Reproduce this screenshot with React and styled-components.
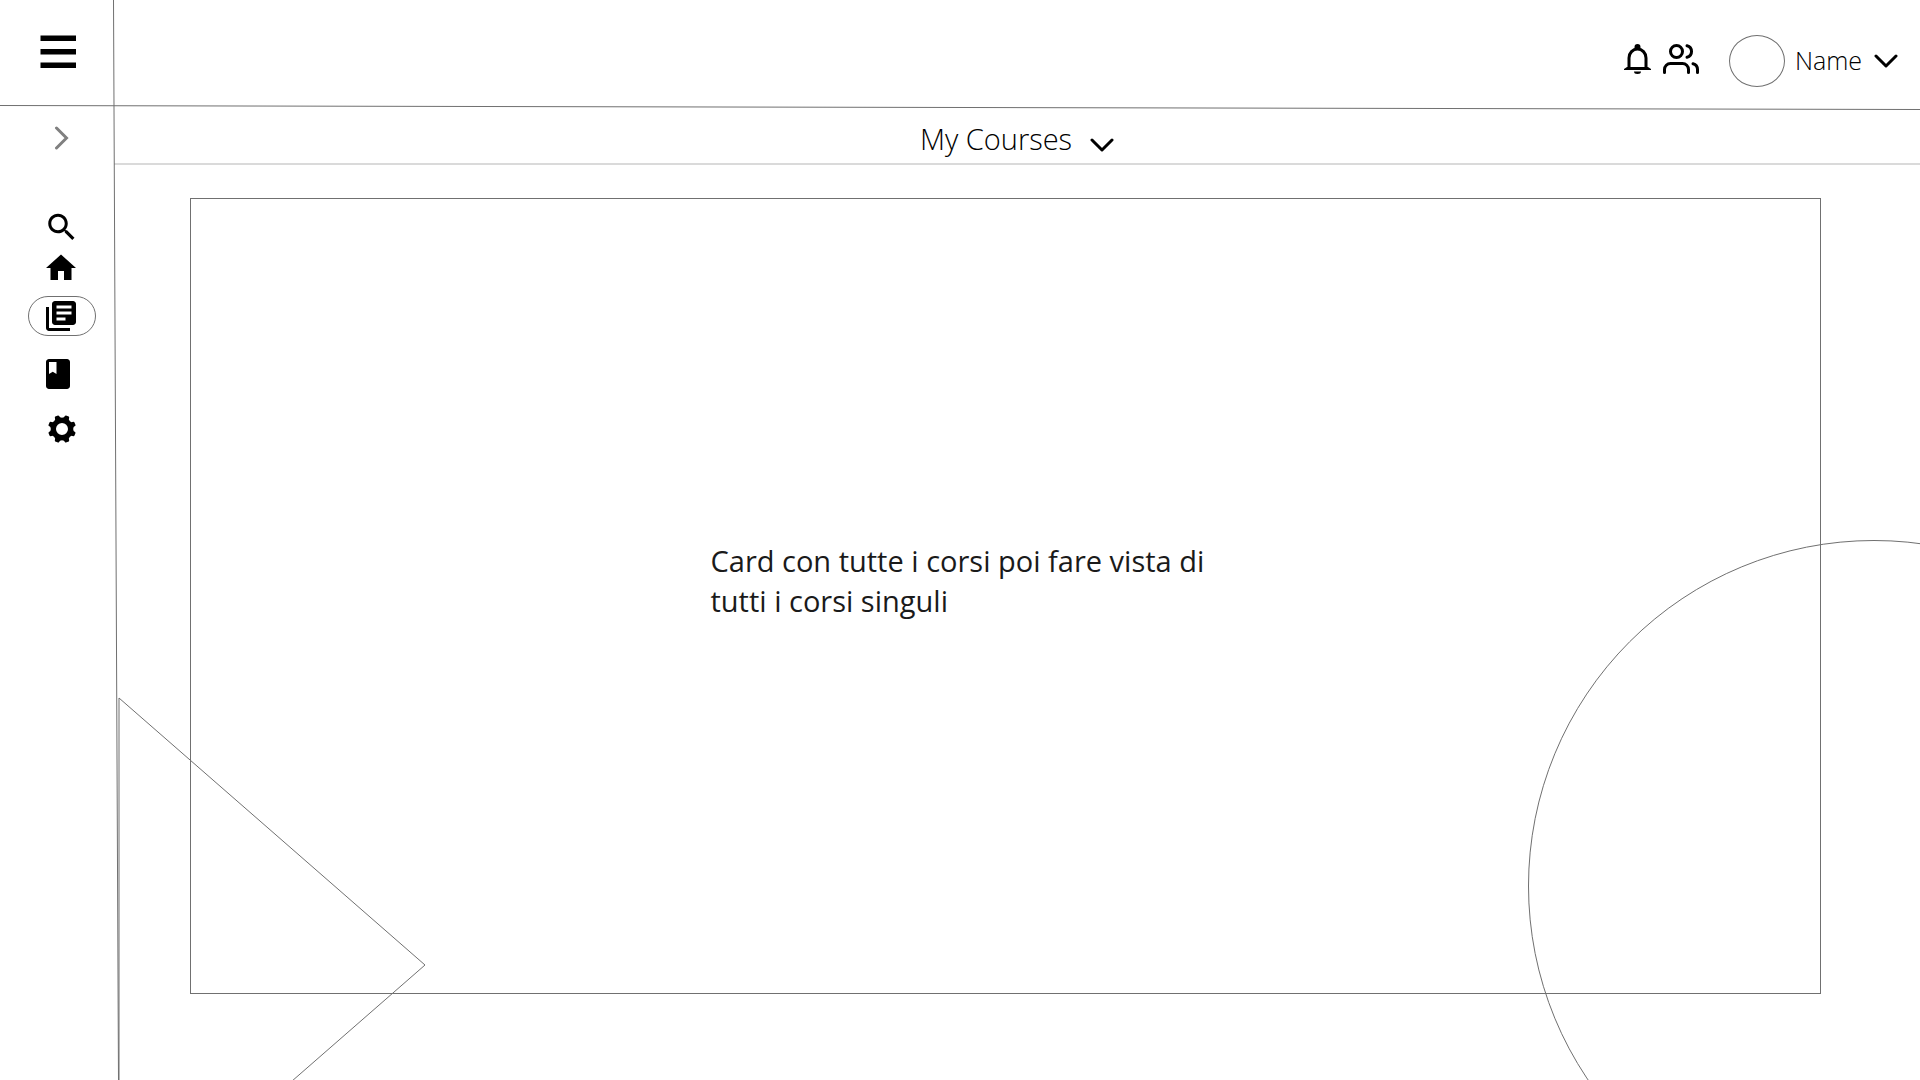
import React from "react";
import styled, { createGlobalStyle } from "styled-components";

const LINE = "#707070";

const GlobalStyle = createGlobalStyle`
  *, *::before, *::after { box-sizing: border-box; }
  body {
    margin: 0;
    background: #fff;
    color: #000;
    font-family: "Open Sans", "Noto Sans", sans-serif;
  }
  button { font: inherit; color: inherit; }
`;

const Page = styled.div`
  position: relative;
  display: grid;
  grid-template-columns: 114px minmax(0, 1fr);
  min-height: 100vh;
  overflow: hidden;
`;

const Rules = styled.svg`
  position: absolute;
  inset: 0;
  width: 100%;
  height: 100%;
  pointer-events: none;
  fill: none;
  stroke: ${LINE};
`;

const Triangle = styled.svg`
  position: absolute;
  left: 118px;
  bottom: -154px;
  width: 310px;
  height: 540px;
  pointer-events: none;
  fill: none;
  stroke: ${LINE};
`;

const Circle = styled.div`
  position: absolute;
  right: -300px;
  bottom: -152px;
  width: 692px;
  height: 692px;
  border: 1px solid ${LINE};
  border-radius: 50%;
  pointer-events: none;
`;

const IconButton = styled.button`
  display: flex;
  align-items: center;
  padding: 0;
  border: 0;
  background: none;
  cursor: pointer;
`;

const Sidebar = styled.aside`
  display: flex;
  flex-direction: column;
  align-items: flex-start;
`;

const MenuArea = styled.div`
  display: flex;
  align-items: center;
  height: 103px;
  padding-left: 40px;
`;

const ExpandArea = styled.div`
  display: flex;
  align-items: center;
  height: 69px;
  padding-left: 54px;
`;

const Nav = styled.nav`
  display: flex;
  flex-direction: column;
  padding: 36px 0 0 28px;
`;

const NavItem = styled(IconButton)`
  width: 68px;
  height: 40px;
  margin-top: ${(p) => p.$gap || 0}px;
  padding-left: 17px;
  border: 1px solid ${(p) => (p.$active ? LINE : "transparent")};
  border-radius: 20px;
`;

const Content = styled.div`
  display: flex;
  flex-direction: column;
`;

const Header = styled.header`
  display: flex;
  align-items: center;
  justify-content: flex-end;
  height: 108px;
  padding: 14px 22px 0 0;
`;

const HeaderIcons = styled.div`
  display: flex;
  align-items: center;
  gap: 12px;
  margin-right: 30px;
  padding-bottom: 4px;
`;

const Account = styled(IconButton)`
  gap: 10px;
  font-size: 25px;
  font-weight: 350;
  line-height: 32px;
`;

const AccountName = styled.span`
  padding: 0 2px 2px 0;
`;

const Avatar = styled.span`
  width: 56px;
  height: 52px;
  border: 1px solid ${LINE};
  border-radius: 50%;
`;

const TitleBar = styled.div`
  display: flex;
  align-items: center;
  justify-content: center;
  height: 57px;
  padding-top: 6px;
  border-bottom: 2px solid #dadada;
`;

const CourseMenu = styled(IconButton)`
  align-items: flex-end;
  gap: 18px;
  font-size: 29px;
  font-weight: 350;
  line-height: 28px;
`;

const Main = styled.main`
  display: flex;
  flex: 1;
  padding: 33px 99px 86px 76px;
`;

const Card = styled.section`
  display: flex;
  flex: 1;
  align-items: center;
  justify-content: center;
  border: 1px solid ${LINE};
  padding: 0 90px 30px 0;
`;

const Note = styled.p`
  width: 500px;
  margin: 0;
  font-size: 29px;
  line-height: 40px;
  color: #1a1a1a;
`;

function ChevronDown() {
  return (
    <svg width="24" height="16" viewBox="0 0 24 16" fill="none" stroke="#000" strokeWidth="3" strokeLinecap="round" strokeLinejoin="round" aria-hidden="true">
      <path d="M2 3 L12 13 L22 3" />
    </svg>
  );
}

// Eight-toothed cog centred on the origin, with a round hole.
function cogPath() {
  const at = (radius, degrees) => {
    const a = (degrees * Math.PI) / 180;
    return `${(radius * Math.cos(a)).toFixed(2)} ${(radius * Math.sin(a)).toFixed(2)}`;
  };
  let d = "";
  for (let i = 0; i < 8; i += 1) {
    const mid = 22.5 + i * 45;
    d += `${i ? "L" : "M"}${at(11.8, mid - 13)} L${at(13.3, mid - 10)} Q${at(14, mid - 9)} ${at(14.1, mid - 6)} L${at(14.1, mid + 6)} Q${at(14, mid + 9)} ${at(13.3, mid + 10)} L${at(11.8, mid + 13)} Q${at(10.7, mid + 22.5)} ${at(11.8, mid + 32)} `;
  }
  return `${d}Z M0 -6 A6 6 0 1 0 0 6 A6 6 0 1 0 0 -6 Z`;
}

const navItems = [
  {
    label: "Search", viewBox: "1.5 2.5 20 20",
    d: "M15.5 14h-.79l-.28-.27C15.41 12.59 16 11.11 16 9.5 16 5.91 13.09 3 9.5 3S3 5.91 3 9.5 5.91 16 9.5 16c1.61 0 3.09-.59 4.23-1.57l.27.28v.79l5 4.99L20.49 19l-4.99-5zm-6 0C7.01 14 5 11.99 5 9.5S7.01 5 9.5 5 14 7.01 14 9.5 11.99 14 9.5 14z",
  },
  { label: "Home", viewBox: "2 2 20 20", d: "M10 20v-6h4v6h5v-8h3L12 3 2 12h3v8z" },
  {
    label: "My Courses", viewBox: "2 2 20 20", active: true, gap: 8,
    d: "M4 6H2v14c0 1.1.9 2 2 2h14v-2H4V6zm16-4H8c-1.1 0-2 .9-2 2v12c0 1.1.9 2 2 2h12c1.1 0 2-.9 2-2V4c0-1.1-.9-2-2-2zm-1 9H9V9h10v2zm-4 4H9v-2h6v2zm4-8H9V5h10v2z",
  },
  {
    label: "Book", viewBox: "4 2 16 20", gap: 18,
    d: "M18 2H6c-1.1 0-2 .9-2 2v16c0 1.1.9 2 2 2h12c1.1 0 2-.9 2-2V4c0-1.1-.9-2-2-2zM6 4h5v8l-2.500-1.500L6 12V4z",
  },
  { label: "Settings", viewBox: "-16 -15 30 30", gap: 15, d: cogPath() },
];

export default function App() {
  return (
    <Page>
      <GlobalStyle />
      <Sidebar>
        <MenuArea>
          <IconButton aria-label="Menu">
            <svg width="36" height="33" viewBox="0 0 36 33" aria-hidden="true">
              <path d="M.5 .5H36V6H.5zM.5 14H36v5.500H.5zM.5 27.500H36V33H.5z" />
            </svg>
          </IconButton>
        </MenuArea>
        <ExpandArea>
          <IconButton aria-label="Expand sidebar">
            <svg width="16" height="24" viewBox="0 0 16 24" fill="none" stroke="#808080" strokeWidth="3" strokeLinecap="round" aria-hidden="true">
              <path d="M2.500 2 L12.500 12 L2.500 22" />
            </svg>
          </IconButton>
        </ExpandArea>
        <Nav aria-label="Main">
          {navItems.map((item) => (
            <NavItem key={item.label} aria-label={item.label} $active={item.active} $gap={item.gap}>
              <svg width="30" height="30" viewBox={item.viewBox} preserveAspectRatio="xMinYMid" fillRule="evenodd" aria-hidden="true">
                <path d={item.d} />
              </svg>
            </NavItem>
          ))}
        </Nav>
      </Sidebar>
      <Content>
        <Header>
          <HeaderIcons>
            <IconButton aria-label="Notifications">
              <svg width="27" height="30" viewBox="0 0 27 30" aria-hidden="true">
                <path d="M5 24V14a8.500 9 0 0 1 17 0v10" fill="none" stroke="#000" strokeWidth="3" />
                <path d="M10.500 4.500V3a3 3 0 0 1 6 0v1.500zM0 26v-1l3-2h21l3 2v1zM10 27.500h7a3.500 2.500 0 0 1-7 0z" />
              </svg>
            </IconButton>
            <IconButton aria-label="People">
              <svg width="36" height="36" viewBox="0 0 24 24" fill="none" stroke="#000" strokeWidth="2" strokeLinecap="round" strokeLinejoin="round" aria-hidden="true">
                <path d="M17 21v-2a4 4 0 0 0-4-4H5a4 4 0 0 0-4 4v2M23 21v-2a4 4 0 0 0-3-3.870M16 3.130a4 4 0 0 1 0 7.750" />
                <circle cx="9" cy="7" r="4" />
              </svg>
            </IconButton>
          </HeaderIcons>
          <Account>
            <Avatar />
            <AccountName>Name</AccountName>
            <ChevronDown />
          </Account>
        </Header>
        <TitleBar>
          <CourseMenu>
            <span>My Courses</span>
            <ChevronDown />
          </CourseMenu>
        </TitleBar>
        <Main>
          <Card>
            <Note>Card con tutte i corsi poi fare vista di tutti i corsi singuli</Note>
          </Card>
        </Main>
      </Content>
      <Rules aria-hidden="true">
        <line x1="113.5" y1="0" x2="118.5" y2="100%" />
        <line x1="0" y1="105.5" x2="100%" y2="109.5" />
      </Rules>
      <Triangle viewBox="0 0 310 540" aria-hidden="true">
        <path d="M1 4 L307 271 L1 538 Z" />
      </Triangle>
      <Circle />
    </Page>
  );
}
